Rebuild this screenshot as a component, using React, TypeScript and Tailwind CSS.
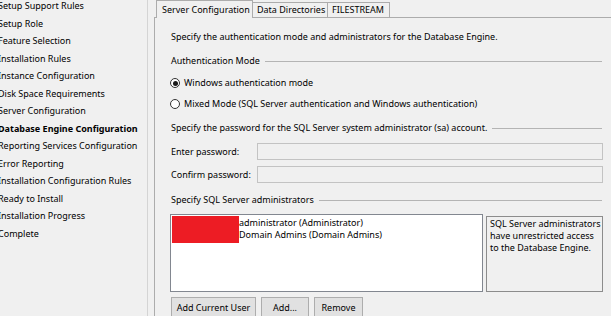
import React from 'react';

const steps = [
  'Setup Support Rules',
  'Setup Role',
  'Feature Selection',
  'Installation Rules',
  'Instance Configuration',
  'Disk Space Requirements',
  'Server Configuration',
  'Database Engine Configuration',
  'Reporting Services Configuration',
  'Error Reporting',
  'Installation Configuration Rules',
  'Ready to Install',
  'Installation Progress',
  'Complete',
];

const current = 'Database Engine Configuration';

function GroupHeader({ label }: { label: string }) {
  return (
    <div className="flex items-center h-[14px] gap-[5px]">
      <span className="whitespace-nowrap">{label}</span>
      <div className="flex-1 h-px bg-[#b4b4b4] mr-px" />
    </div>
  );
}

function Radio({ label, checked }: { label: string; checked?: boolean }) {
  return (
    <div className="flex items-center h-[14px] gap-[4px]">
      <span className="w-[10px] h-[10px] rounded-full border border-[#333] bg-white flex items-center justify-center shrink-0">
        {checked && <span className="w-[5px] h-[5px] rounded-full bg-[#1a1a1a]" />}
      </span>
      <span className="whitespace-nowrap">{label}</span>
    </div>
  );
}

function PasswordRow({ label, className }: { label: string; className?: string }) {
  return (
    <div className={`flex items-center h-[17px] ${className ?? ''}`}>
      <span className="w-[86px] shrink-0 whitespace-nowrap">{label}</span>
      <div className="flex-1 h-full border border-[#c3c3c3] bg-[#f0f0f0]" />
    </div>
  );
}

function Button({ label, width }: { label: string; width: string }) {
  return (
    <button
      type="button"
      className={`${width} h-[21px] border border-[#adadad] bg-[#e1e1e1] flex items-center justify-center whitespace-nowrap`}
    >
      {label}
    </button>
  );
}

export default function App() {
  return (
    <div className="w-[611px] h-[316px] overflow-hidden bg-[#f0f0f0] flex font-['Noto_Sans',sans-serif] text-[9px] text-black">
      {/* wizard steps */}
      <aside className="w-[148px] shrink-0 border-r border-[#d4d4d4] overflow-hidden">
        <ul className="-mt-[3px] -ml-[2px]">
          {steps.map((s) => (
            <li
              key={s}
              className={`leading-[17.5px] whitespace-nowrap ${s === current ? 'font-bold' : ''}`}
            >
              {s}
            </li>
          ))}
        </ul>
      </aside>

      <main className="flex-1 pl-[6px] flex flex-col min-w-0">
        {/* tabs */}
        <div className="flex items-end h-[17px] pl-[2px] relative z-10">
          <div className="w-[97px] h-[18px] -mb-px border-l border-t border-r border-[#acacac] bg-[#f0f0f0] pl-[5px] flex items-center whitespace-nowrap">
            Server Configuration
          </div>
          <div className="w-[75px] h-[15px] border-t border-r border-[#acacac] pl-[4px] flex items-center whitespace-nowrap">
            Data Directories
          </div>
          <div className="w-[62px] h-[15px] border-t border-r border-[#acacac] pl-[4px] flex items-center whitespace-nowrap">
            FILESTREAM
          </div>
        </div>

        {/* tab page */}
        <section className="flex-1 border-l border-t border-[#acacac] pl-[16px] pt-px">
          <div className="w-[432px] flex flex-col">
            <div className="h-[14px] mt-[11px] flex items-center whitespace-nowrap">
              Specify the authentication mode and administrators for the Database Engine.
            </div>

            <div className="mt-[10px]">
              <GroupHeader label="Authentication Mode" />
            </div>
            <div className="mt-[8px] -ml-px">
              <Radio label="Windows authentication mode" checked />
            </div>
            <div className="mt-[7px] -ml-px">
              <Radio label="Mixed Mode (SQL Server authentication and Windows authentication)" />
            </div>

            <div className="mt-[10px]">
              <GroupHeader label="Specify the password for the SQL Server system administrator (sa) account." />
            </div>
            <PasswordRow label="Enter password:" className="mt-[8px]" />
            <PasswordRow label="Confirm password:" className="mt-[6px]" />

            <div className="mt-[10px]">
              <GroupHeader label="Specify SQL Server administrators" />
            </div>

            <div className="mt-[7px] -ml-px flex items-start">
              <div className="w-[313px] h-[78px] border border-[#828790] bg-white flex pt-px pl-px">
                <div className="w-[67px] h-[27px] bg-[#ed1c24] shrink-0" />
                <div className="leading-[12px] pt-px">
                  <div className="whitespace-nowrap">administrator (Administrator)</div>
                  <div className="whitespace-nowrap">Domain Admins (Domain Admins)</div>
                </div>
              </div>
              <div className="ml-[3px] mt-[2px] w-[117px] h-[76px] border border-[#8c8c8c] bg-[#f0f0f0] pl-[3px] pt-[1px] leading-[12px]">
                <div>SQL Server administrators</div>
                <div>have unrestricted access</div>
                <div>to the Database Engine.</div>
              </div>
            </div>

            <div className="mt-[5px] flex gap-[5px]">
              <Button label="Add Current User" width="w-[85px]" />
              <Button label="Add..." width="w-[48px]" />
              <Button label="Remove" width="w-[49px]" />
            </div>
          </div>
        </section>
      </main>
    </div>
  );
}
